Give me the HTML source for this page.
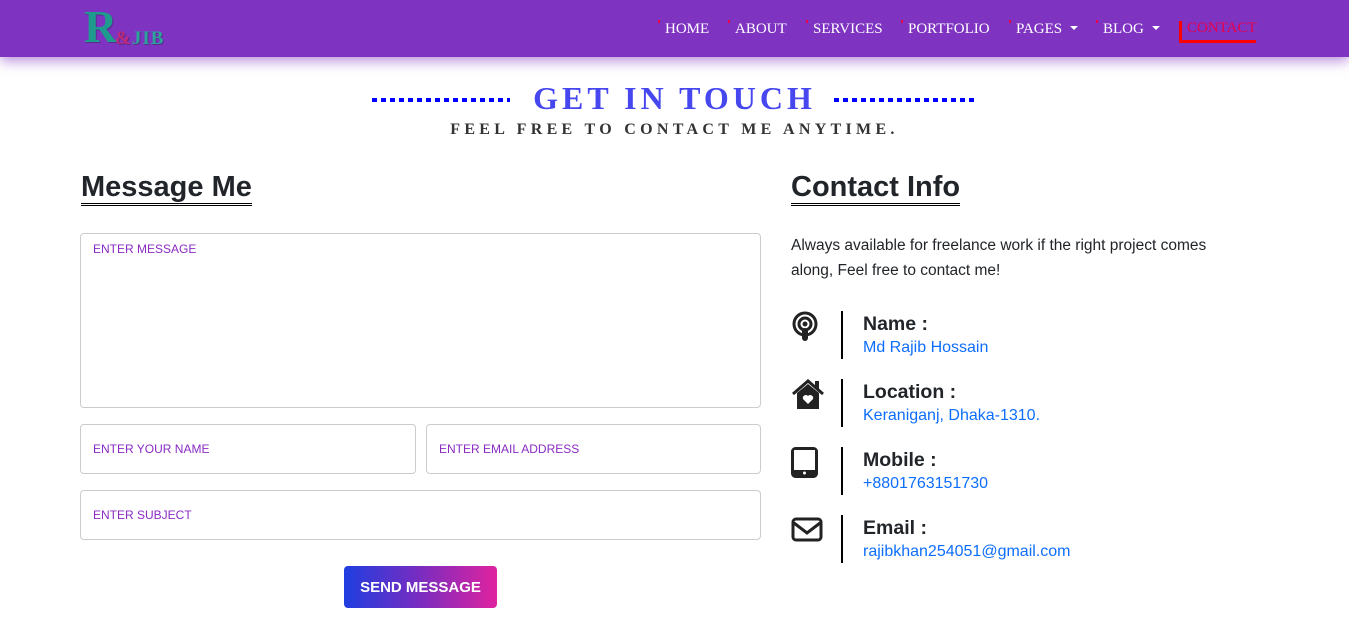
<!DOCTYPE html>
<html><head><meta charset="utf-8"><style>
*{margin:0;padding:0;box-sizing:border-box}
body{width:1349px;height:642px;background:#fff;font-family:"Liberation Sans","DejaVu Sans",sans-serif;overflow:hidden;position:relative}
.nav{position:absolute;left:0;top:0;width:1349px;height:57px;background:#7f33c1;box-shadow:0 4px 12px rgba(127,51,193,.55)}
.logo{position:absolute;left:84px;top:4px;font-family:"Liberation Serif",serif;font-weight:bold;color:#1f9a8f;text-shadow:1px 1px 0 #5a2c8c}
.logo .R{font-size:46px;line-height:46px}
.logo .j{font-size:19px;position:absolute;left:31px;top:24px;letter-spacing:1px;color:#2aa39a}
.logo .j i{font-style:normal;color:#c0287a}
.menu{position:absolute;top:21px;font-family:"Liberation Serif",serif;font-size:15px;color:#fff}
.menu span{position:absolute;white-space:nowrap}
.menu span:before{content:"";position:absolute;left:-7px;top:-1px;width:2px;height:3px;background:#f0004a}
.car{display:inline-block;width:0;height:0;border-left:4px solid transparent;border-right:4px solid transparent;border-top:4px solid #fff;margin-left:8px;vertical-align:3px}
.contact{position:absolute;left:1179px;top:21px;height:22px;border-left:3px solid #f00;border-bottom:3px solid #f00;padding-left:5px;width:77px;color:#e8004a;font-family:"Liberation Serif",serif;font-size:15px;line-height:15px}
.h1{position:absolute;top:80px;left:0;width:1349px;text-align:center;font-family:"Liberation Serif",serif;font-weight:bold;font-size:32px;letter-spacing:4px;color:#4747f0}
.dots{position:absolute;top:98px;height:4px;width:138px;background:repeating-linear-gradient(90deg,#0000ff 0 5px,transparent 5px 9px)}
.sub{position:absolute;top:121px;left:0;width:1349px;text-align:center;font-family:"Liberation Serif",serif;font-weight:bold;font-size:16px;letter-spacing:4.3px;color:#333}
h2{position:absolute;font-size:29px;font-weight:bold;color:#212529;border-bottom:3px double #000;line-height:31px}
.box{position:absolute;border:1px solid #ccc;border-radius:4px;font-size:12px;color:#8a2bc4;padding-left:12px}
.btn{position:absolute;left:344px;top:566px;width:153px;height:42px;border-radius:4px;background:linear-gradient(90deg,#1f3ee0,#7a2cc0 50%,#e0239f);color:#fff;font-weight:bold;font-size:15px;text-align:center;line-height:43px}
.p{position:absolute;left:791px;top:234px;width:460px;font-size:15.5px;line-height:24.5px;color:#212529}
.item{position:absolute;left:791px}
.item .bar{position:absolute;left:50px;top:0;width:2px;height:48px;background:#000}
.item b{position:absolute;left:72px;top:2px;font-size:19.5px;color:#212529;white-space:nowrap}
.item a{position:absolute;left:72px;top:28px;font-size:16px;color:#0d6efd;white-space:nowrap}
.item svg{position:absolute;left:0;top:0}
</style></head><body>
<div class="nav">
 <div class="logo"><span class="R">R</span><span class="j"><i>&amp;</i>JIB</span></div>
 <div class="menu">
  <span style="left:665px">HOME</span>
  <span style="left:735px">ABOUT</span>
  <span style="left:813px">SERVICES</span>
  <span style="left:908px">PORTFOLIO</span>
  <span style="left:1016px">PAGES<i class="car"></i></span>
  <span style="left:1103px">BLOG<i class="car"></i></span>
 </div>
 <div class="contact">CONTACT</div>
</div>
<div class="dots" style="left:372px"></div>
<div class="dots" style="left:834px;width:144px"></div>
<div class="h1">GET IN TOUCH</div>
<div class="sub">FEEL FREE TO CONTACT ME ANYTIME.</div>

<h2 style="left:81px;top:172px">Message Me</h2>
<div class="box" style="left:80px;top:233px;width:681px;height:175px;padding-top:8px">ENTER MESSAGE</div>
<div class="box" style="left:80px;top:424px;width:336px;height:50px;line-height:48px">ENTER YOUR NAME</div>
<div class="box" style="left:426px;top:424px;width:335px;height:50px;line-height:48px">ENTER EMAIL ADDRESS</div>
<div class="box" style="left:80px;top:490px;width:681px;height:50px;line-height:48px">ENTER SUBJECT</div>
<div class="btn">SEND MESSAGE</div>

<h2 style="left:791px;top:172px">Contact Info</h2>
<div class="p">Always available for freelance work if the right project comes along, Feel free to contact me!</div>

<div class="item" style="top:311px"><svg width="28" height="32" viewBox="0 0 28 32"><circle cx="14" cy="13" r="11" fill="none" stroke="#222" stroke-width="3"/><circle cx="14" cy="13" r="6" fill="none" stroke="#222" stroke-width="3"/><circle cx="14" cy="13" r="2.5" fill="#222"/><rect x="11" y="17" width="6" height="13" rx="3" fill="#222"/></svg><div class="bar"></div><b>Name :</b><a>Md Rajib Hossain</a></div>
<div class="item" style="top:379px"><svg width="34" height="32" viewBox="0 0 34 32"><path d="M2 15 L17 2 L32 15" fill="none" stroke="#222" stroke-width="3"/><rect x="24" y="2" width="4" height="8" fill="#222"/><path d="M6 14 L17 5 L28 14 V30 H6 Z" fill="#222"/><path d="M17 25 L12 20 a3 3 0 0 1 5 -3 a3 3 0 0 1 5 3 Z" fill="#fff"/></svg><div class="bar"></div><b>Location :</b><a>Keraniganj, Dhaka-1310.</a></div>
<div class="item" style="top:447px"><svg width="28" height="32" viewBox="0 0 28 32"><rect x="1.5" y="1.5" width="24" height="28" rx="3" fill="none" stroke="#222" stroke-width="3"/><rect x="3" y="3" width="21" height="20" fill="#fff"/><path d="M1.5 23 H25.5 V27 a3 3 0 0 1-3 3 H4.5 a3 3 0 0 1-3-3Z" fill="#222"/><circle cx="13.5" cy="26" r="1.5" fill="#fff"/></svg><div class="bar"></div><b>Mobile :</b><a>+8801763151730</a></div>
<div class="item" style="top:515px"><svg width="32" height="32" viewBox="0 0 32 32"><rect x="2" y="4" width="28" height="21" rx="3" fill="none" stroke="#222" stroke-width="3"/><path d="M3 8 L16 18 L29 8" fill="none" stroke="#222" stroke-width="3"/></svg><div class="bar"></div><b>Email :</b><a>rajibkhan254051@gmail.com</a></div>
</body></html>
